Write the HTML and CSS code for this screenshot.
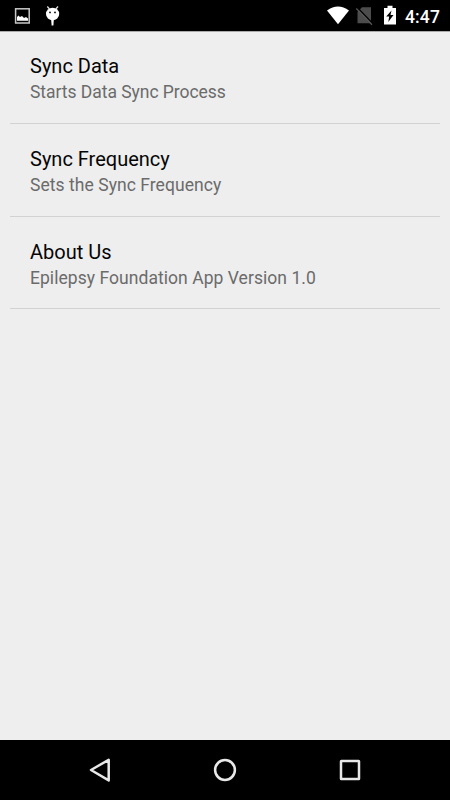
FILE: index.html
```html
<!DOCTYPE html>
<html lang="en">
<head>
<meta charset="utf-8">
<title>Settings</title>
<link rel="stylesheet" href="styles.css">
</head>
<body>
<header class="status">
  <svg class="status-left" width="80" height="31" viewBox="0 0 80 31">
    <rect x="15.6" y="8.8" width="13.6" height="14.2" fill="none" stroke="#c8c8c8" stroke-width="1.5"/>
    <path d="M17 20.8V17L18.5 15.5L20 17L22 16L24 18L26 17L28 18.5V20.8Z" fill="#fff"/>
    <path d="M47.3 6.5L49.5 9M58 6.5L55.8 9" stroke="#ddd" stroke-width="1.3"/>
    <ellipse cx="52.6" cy="14" rx="6.6" ry="6.2" fill="#fff"/>
    <path d="M51.2 20H53.8L53.4 25.6H51.6Z" fill="#fff"/>
    <circle cx="50" cy="12.4" r=".9"/><circle cx="55" cy="12.4" r=".9"/>
  </svg>
  <svg class="status-right" width="80" height="31" viewBox="320 0 80 31">
    <path d="M327 10.5Q338 2.5 349 10.5L338 24.3Z" fill="#fff"/>
    <path d="M357.5 12L362 7.3H371V23.3H357.5Z" fill="#4c4c4c"/>
    <path d="M357.8 8L372.5 23.2" stroke="#000" stroke-width="1.3"/>
    <path d="M356.3 8.5L372 24.7" stroke="#555" stroke-width="1.3"/>
    <path d="M384 8H387.5V5.7H392.5V8H396V24.6H384Z" fill="#fff"/>
    <path d="M391.5 10.5L386.2 16.5H389.2L388.3 22L393.5 15H390.5Z"/>
  </svg>
  <time class="clock">4:47</time>
</header>
<main class="list">
  <section class="item"><h2 class="title">Sync Data</h2><p class="summary">Starts Data Sync Process</p></section>
  <section class="item"><h2 class="title">Sync Frequency</h2><p class="summary">Sets the Sync Frequency</p></section>
  <section class="item"><h2 class="title">About Us</h2><p class="summary">Epilepsy Foundation App Version 1.0</p></section>
</main>
<nav class="nav">
  <svg width="30" height="30" viewBox="0 0 30 30"><path d="M6 15L23.7 4.8V25.4Z"/></svg>
  <svg width="30" height="30" viewBox="0 0 30 30"><circle cx="15" cy="15" r="9.9"/></svg>
  <svg width="30" height="30" viewBox="0 0 30 30"><rect x="6" y="6" width="18" height="18" rx=".3"/></svg>
</nav>
</body>
</html>
```

FILE: styles.css
```css
* { box-sizing: border-box; }
body {
  margin: 0;
  height: 800px;
  display: flex;
  flex-direction: column;
  background: #eee;
  font-family: Roboto, sans-serif;
  overflow: hidden;
}
.status {
  height: 32px;
  display: flex;
  background: #000;
  border-bottom: 1px solid #aaa;
}
.status-right { margin-left: auto; }
.clock {
  width: 50px;
  padding-left: 5px;
  color: #fff;
  font-size: 17.5px;
  font-weight: 500;
  line-height: 34px;
  letter-spacing: 0.15px;
}
.list {
  flex: 1;
  padding: 0 10px;
}
.item {
  height: 92.5px;
  padding: 23px 20px 0;
  border-bottom: 1px solid #d2d2d2;
}
.item:first-child {
  height: 92px;
  padding-top: 22px;
}
.item:nth-child(2) {
  height: 93px;
}
.item:last-child {
  height: 92px;
}
.title {
  margin: 0;
  font-size: 20px;
  font-weight: 400;
  line-height: 24px;
  color: #050505;
}
.summary {
  margin: 2px 0 0;
  font-size: 17.5px;
  line-height: 24px;
  letter-spacing: 0.05px;
  color: #6b6b6b;
}
.item:first-child .summary {
  letter-spacing: -0.04px;
}
.nav {
  height: 60px;
  display: flex;
  justify-content: center;
  align-items: center;
  gap: 95px;
  background: #000;
}
.nav path, .nav circle, .nav rect {
  fill: none;
  stroke: #e8e8e8;
  stroke-width: 2.5;
  stroke-linejoin: round;
}
```
